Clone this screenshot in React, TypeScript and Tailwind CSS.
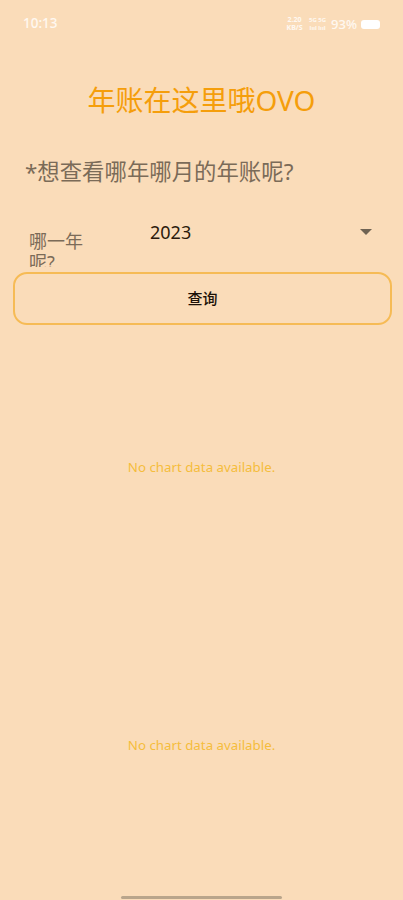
const cjk = "font-['Noto_Sans','Noto_Sans_CJK_SC',sans-serif]";

function StatusBar() {
  return (
    <div className="flex h-12 items-center justify-between pl-[23px] pr-[23px] text-white/80">
      <span className="text-[13.5px] font-medium leading-none">10:13</span>
      <div className="flex items-center">
        <div className="mr-[5px] flex w-[17px] flex-col items-center text-[7px] font-bold leading-[8px]">
          <span>2.20</span>
          <span>KB/S</span>
        </div>
        <div className="mr-[4px] flex w-[19px] flex-col items-center text-[6px] font-bold leading-[8px]">
          <span>5G 5G</span>
          <span>lııl lııl</span>
        </div>
        <span className="mr-[4px] text-[13px] font-medium leading-none">93%</span>
        <div className="h-[9px] w-[19px] rounded-[3px] bg-white" />
      </div>
    </div>
  );
}

function EmptyChart({ className }: { className: string }) {
  return (
    <div className={`flex items-center justify-center text-[13.3px] text-[#f5bd3c] ${className}`}>
      No chart data available.
    </div>
  );
}

export default function App() {
  return (
    <div className={`relative h-[900px] w-[403px] overflow-hidden bg-[#fadcb9] ${cjk}`}>
      <StatusBar />
      <h1 className="mt-[34px] h-9 text-center text-[28px] leading-9 text-[#f59e0b]">年账在这里哦OVO</h1>
      <p className="mt-[38px] h-8 pl-[25px] text-[22.4px] leading-8 text-[#7b6b58]">*想查看哪年哪月的年账呢?</p>

      {/* year picker */}
      <div className="mt-[22px] flex h-[57px] overflow-hidden">
        <div className="mt-[21px] ml-[29px] w-[60px] text-[18px] leading-[21px] text-[#7b6b58]">哪一年呢?</div>
        <div className="ml-[61px] flex h-[44px] flex-1 items-center justify-between pr-[31px] text-[18px] text-[#2b1a0c]">
          <span>2023</span>
          <div className="h-0 w-0 border-x-[6px] border-t-[6px] border-x-transparent border-t-[#6f6353]" />
        </div>
      </div>

      <button className="mx-[13px] mt-[5px] flex h-[53px] w-[379px] items-center justify-center rounded-[14px] border-2 border-[#f6bb55] text-[15px] font-medium text-[#1c1108]">
        查询
      </button>

      <EmptyChart className="mt-[132px] h-[22px]" />
      <EmptyChart className="mt-[256px] h-[22px]" />

      <div className="absolute bottom-[1px] left-[121px] h-[3px] w-[161px] rounded-full bg-[#b9a58b]" />
    </div>
  );
}
